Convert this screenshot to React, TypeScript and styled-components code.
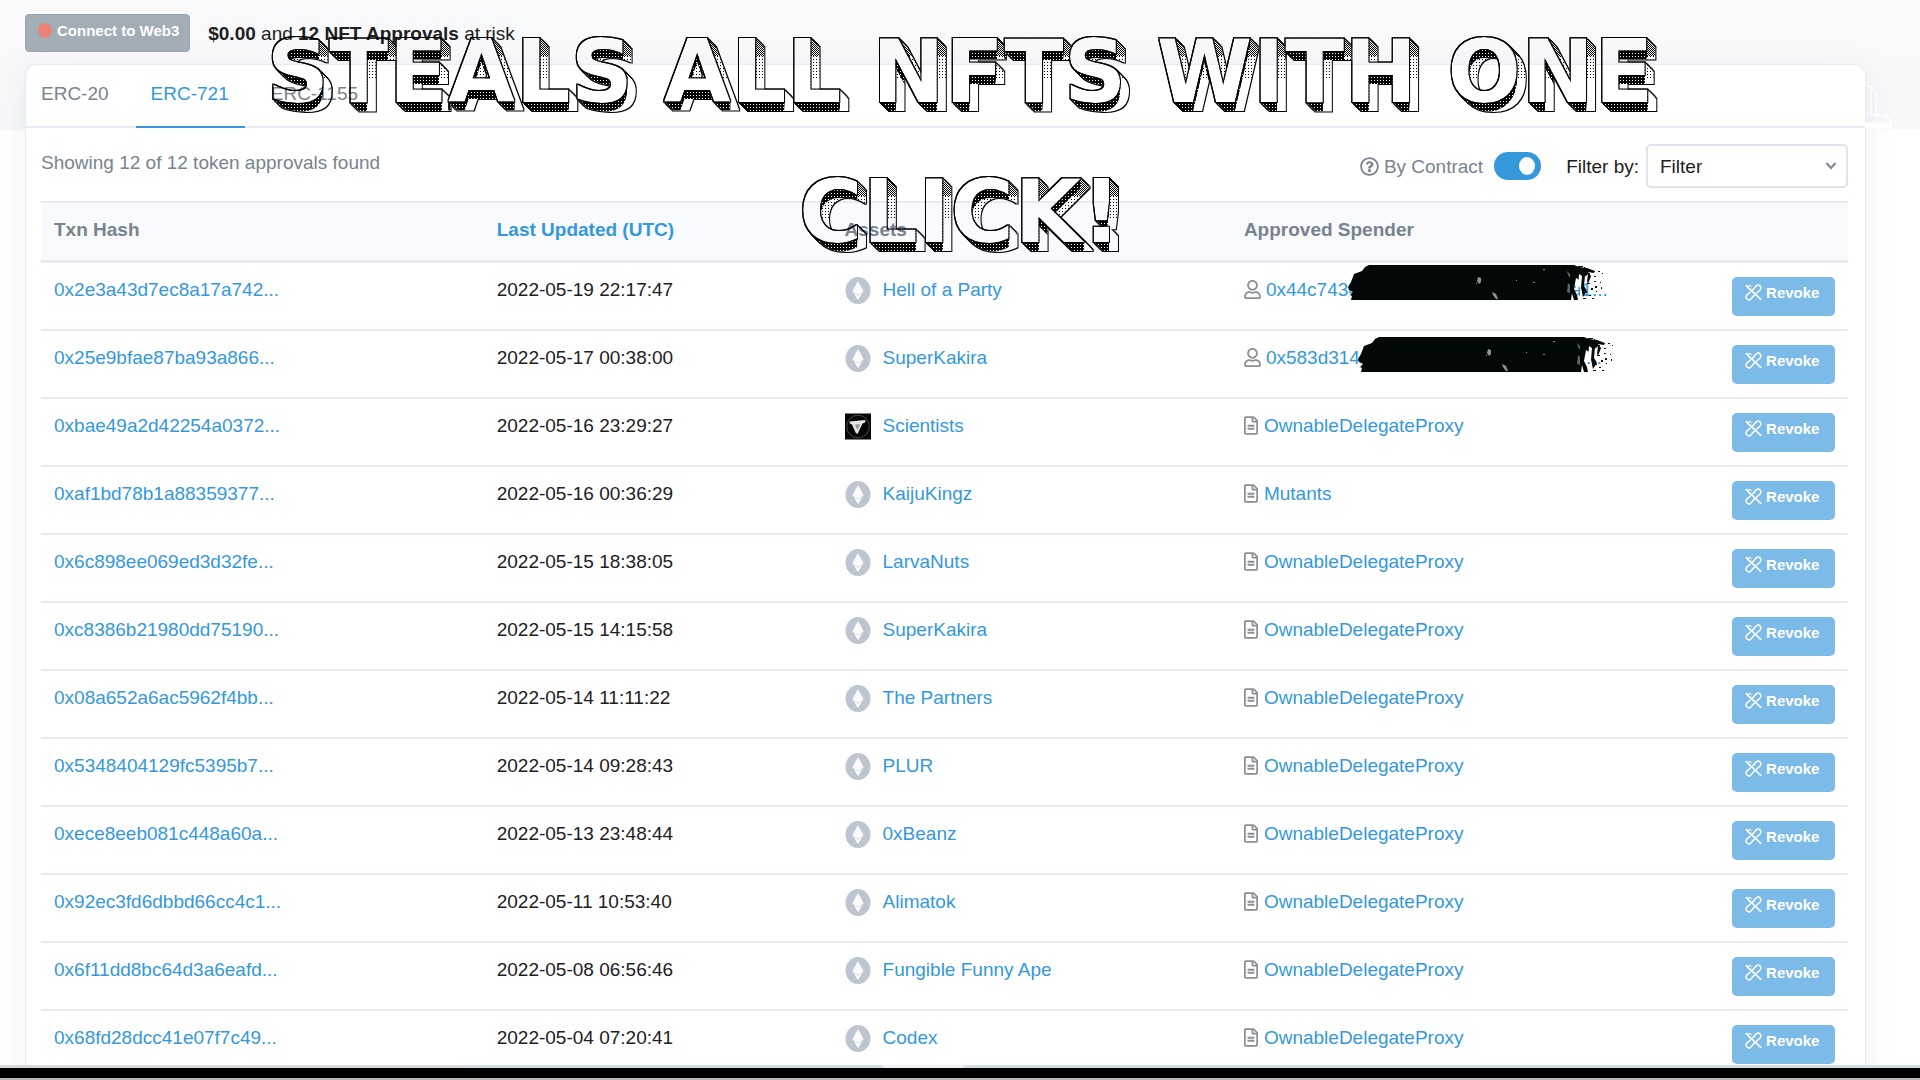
import React from "react";
import styled, { createGlobalStyle } from "styled-components";
import { FaRegUser, FaRegFileAlt, FaRegQuestionCircle } from "react-icons/fa";

const blue = "#3498db";
const grey = "#77838f";
const line = "#e7eaf3";

const GlobalStyle = createGlobalStyle`
  *, *::before, *::after { box-sizing: border-box; }
  body {
    margin: 0;
    background: #fff;
    color: #1e2022;
    font-family: "Liberation Sans", Arial, sans-serif;
    font-size: 19px;
    line-height: 25px;
  }
  a { color: ${blue}; text-decoration: none; }
  button, select, input { font-family: inherit; margin: 0; }
`;

const Page = styled.div`
  position: relative;
  height: 100vh;
  display: flex;
  flex-direction: column;
  overflow: hidden;
  background: linear-gradient(#f8f9fb, #f6f8fa) top / 100% 130px no-repeat #fff;
`;

const Main = styled.main`
  flex: 1;
  min-height: 0;
  overflow: hidden;
  display: flex;
  flex-direction: column;
  padding: 0 54px 0 25px;
`;

const TopBar = styled.header`
  flex: none;
  display: flex;
  align-items: flex-start;
  gap: 18px;
  padding: 14px 0 10px;
`;

const ConnectButton = styled.button`
  display: flex;
  align-items: center;
  gap: 5px;
  height: 38px;
  padding: 0 10px 5px 12px;
  border: 1px solid #9aa5ae;
  border-radius: 4px;
  background: #a3adb5;
  color: #fff;
  font-size: 15px;
  font-weight: 700;
`;

const StatusDot = styled.span`
  width: 14px;
  height: 15px;
  border-radius: 50%;
  background: #ea8279;
`;

const RiskText = styled.p`
  margin: 0;
  line-height: 40px;
`;

const Card = styled.section`
  flex: none;
  background: #fff;
  border: 1px solid ${line};
  border-radius: 12px;
  box-shadow: 0 8px 30px rgba(140, 152, 164, 0.14);
`;

const Tabs = styled.nav`
  display: flex;
  gap: 11px;
  border-bottom: 2px solid ${line};
`;

const Tab = styled.a<{ $active?: boolean }>`
  height: 63px;
  margin-bottom: -2px;
  padding: 0 16px 0 15px;
  line-height: 58px;
  color: ${(p) => (p.$active ? blue : grey)};
  border-bottom: 2px solid ${(p) => (p.$active ? blue : "transparent")};
`;

const CardBody = styled.div`
  padding: 0 17px 20px 15px;
`;

const Toolbar = styled.div`
  display: flex;
  justify-content: space-between;
  align-items: flex-start;
  padding: 16px 0 13px;
`;

const Count = styled.p`
  margin: 0;
  line-height: 38px;
  color: ${grey};
`;

const Controls = styled.div`
  display: flex;
  align-items: center;
  height: 44px;
`;

const SwitchLabel = styled.label`
  display: flex;
  align-items: center;
  gap: 5px;
  margin-right: 25px;
  color: ${grey};
`;

const Switch = styled.input`
  appearance: none;
  width: 47px;
  height: 28px;
  margin-left: 6px;
  padding: 5px 6px;
  display: flex;
  justify-content: flex-end;
  border-radius: 14px;
  background: ${blue};
  &::after {
    content: "";
    width: 16px;
    height: 18px;
    border-radius: 50%;
    background: #fff;
  }
  &:not(:checked) { justify-content: flex-start; background: #bdc5d1; }
`;

const FilterLabel = styled.label`
  margin-right: 7px;
`;

const FilterBox = styled.span`
  display: grid;
  align-items: center;
  width: 202px;
  & > * { grid-area: 1 / 1; }
  & > svg { justify-self: end; margin-right: 11px; pointer-events: none; }
`;

const FilterSelect = styled.select`
  appearance: none;
  height: 44px;
  width: 100%;
  padding: 0 12px;
  border: 2px solid #dfe3ea;
  border-radius: 5px;
  background: #fff;
  color: #1e2022;
  font-size: 19px;
`;

const Table = styled.table`
  width: 100%;
  table-layout: fixed;
  border-collapse: separate;
  border-spacing: 0;
`;

const Th = styled.th<{ $w: string }>`
  width: ${(p) => p.$w};
  height: 62px;
  padding: 0 13px 4px;
  border-top: 2px solid ${line};
  border-bottom: 3px solid ${line};
  background: #f8fafd;
  color: ${grey};
  text-align: left;
`;

const Td = styled.td`
  height: 68px;
  padding: 14px 13px 0;
  border-bottom: 2px solid ${line};
  vertical-align: top;
  white-space: nowrap;
`;

const Asset = styled.span`
  display: flex;
  align-items: flex-start;
  gap: 12px;
`;

const Spender = styled.span<{ $wide?: boolean }>`
  position: relative;
  display: flex;
  align-items: center;
  gap: ${(p) => (p.$wide ? 5 : 6)}px;
  color: #8b8f97;
`;

const UserIcon = styled(FaRegUser)`
  width: 17px;
  height: 19px;
`;

const FileIcon = styled(FaRegFileAlt)`
  width: 14px;
  height: 19px;
`;

const HiddenSpender = styled.a<{ $span: number }>`
  display: flex;
  justify-content: space-between;
  width: ${(p) => p.$span}px;
`;

const Brush = styled.svg<{ $left: number; $top: number }>`
  position: absolute;
  left: ${(p) => p.$left}px;
  top: ${(p) => p.$top}px;
`;

const RevokeButton = styled.button`
  display: flex;
  align-items: center;
  justify-content: center;
  gap: 4px;
  width: 103px;
  height: 39px;
  padding: 0 2px 8px 0;
  border: 0;
  border-radius: 5px;
  background: #7cbae8;
  color: #fff;
  font-size: 15px;
  font-weight: 700;
`;

const Headline = styled.h1`
  position: absolute;
  top: 0;
  left: 0;
  right: 0;
  margin: 0;
  padding-top: 2px;
  text-align: center;
  color: #000;
  font: 700 87px/140px "DejaVu Sans", Inter, sans-serif;
  pointer-events: none;
`;

const HeadlineRow = styled.span`
  display: block;
  white-space: nowrap;
  filter: url(#extrude);
`;

const Defs = styled.svg`
  position: absolute;
  width: 0;
  height: 0;
`;

const Ghost = styled.svg`
  position: absolute;
  top: 84px;
  right: 26px;
`;

const Strip = styled.div`
  flex: none;
  display: flex;
  height: 3px;
`;

const StripPart = styled.span<{ $grow: number; $c: string }>`
  flex: ${(p) => p.$grow} 0 0;
  background: ${(p) => p.$c};
`;

const BottomBar = styled.footer`
  flex: none;
  height: 12px;
  background: #000;
  border-bottom: 2px solid #b4b8bd;
`;

const rows: [string, string, string, string][] = [
  ["0x2e3a43d7ec8a17a742...", "2022-05-19 22:17:47", "Hell of a Party", "0x44c7434"],
  ["0x25e9bfae87ba93a866...", "2022-05-17 00:38:00", "SuperKakira", "0x583d314"],
  ["0xbae49a2d42254a0372...", "2022-05-16 23:29:27", "Scientists", "OwnableDelegateProxy"],
  ["0xaf1bd78b1a88359377...", "2022-05-16 00:36:29", "KaijuKingz", "Mutants"],
  ["0x6c898ee069ed3d32fe...", "2022-05-15 18:38:05", "LarvaNuts", "OwnableDelegateProxy"],
  ["0xc8386b21980dd75190...", "2022-05-15 14:15:58", "SuperKakira", "OwnableDelegateProxy"],
  ["0x08a652a6ac5962f4bb...", "2022-05-14 11:11:22", "The Partners", "OwnableDelegateProxy"],
  ["0x5348404129fc5395b7...", "2022-05-14 09:28:43", "PLUR", "OwnableDelegateProxy"],
  ["0xece8eeb081c448a60a...", "2022-05-13 23:48:44", "0xBeanz", "OwnableDelegateProxy"],
  ["0x92ec3fd6dbbd66cc4c1...", "2022-05-11 10:53:40", "Alimatok", "OwnableDelegateProxy"],
  ["0x6f11dd8bc64d3a6eafd...", "2022-05-08 06:56:46", "Fungible Funny Ape", "OwnableDelegateProxy"],
  ["0x68fd28dcc41e07f7c49...", "2022-05-04 07:20:41", "Codex", "OwnableDelegateProxy"],
];

const EthIcon = () => (
  <svg width="26" height="27" viewBox="0 0 26 27" aria-hidden="true">
    <ellipse cx="13" cy="13.5" rx="12.5" ry="13.5" fill="#bdc5d1" />
    <path d="M13 4 L18.5 14 L13 23.3 L7.5 14 Z" fill="#fbfbfc" />
    <path d="M7.5 14.4 L13 17.6 L18.5 14.4 L17.8 15.8 L13 18.8 L8.2 15.8 Z" fill="#d9dee5" />
  </svg>
);

const ScientistsIcon = () => (
  <svg width="26" height="27" viewBox="0 0 26 27" aria-hidden="true">
    <rect width="26" height="26" y="0.5" fill="#060606" />
    <circle cx="13" cy="13.5" r="11.3" fill="none" stroke="#4a4a4a" strokeWidth="1" />
    <path d="M4.5 8.5 L20.5 7 L20 9.5 L17.5 10.5 L12.5 21 L10.5 19.5 L7 11.5 L4.8 10.5 Z" fill="#e6e6e6" />
    <path d="M10 11.5 L15.5 11.2 L12.3 17 Z" fill="#999" />
  </svg>
);

const RevokeIcon = () => (
  <svg width="17" height="17" viewBox="0 0 17 17" fill="none" stroke="#fff" strokeWidth="1.5" strokeLinecap="round" strokeLinejoin="round" aria-hidden="true">
    <path d="M1.2 1.6 L15.8 15.4" />
    <path d="M7 7.2 C4.6 5.6 1.4 3.6 3.4 1.8 C4.6 1 5.6 1.8 6 2.4" strokeWidth="1.1" />
    <path d="M5.4 8 L2.2 10.6 C.6 12.2 .8 14 1.9 15 C3.2 16.2 5 15.9 6.3 14.6 L9.6 10.8" />
    <path d="M7.4 6.2 L10.6 2.4 C11.9 1.1 13.8 .8 15 1.9 C16.2 3 16.2 4.8 14.8 6.2 L11.6 9" />
  </svg>
);

const specks = [
  [228, 5], [232, 8, 3, 2], [236, 3], [241, 9], [246, 12, 2, 1], [250, 7, 2], [254, 9], [239, 19, 3], [246, 17, 2], [252, 18, 1], [243, 24, 2, 2],
  [236, 28, 3, 1], [241, 31, 2], [248, 27], [247, 22, 2, 2], [235, 34, 3], [230, 2, 5, 1], [238, 6, 6, 1], [253, 23, 1, 2], [244, 34, 2], [234, 13, 2, 5],
];

const RedactBrush = ({ left, top }: { left: number; top: number }) => (
  <Brush $left={left} $top={top} width="262" height="37" viewBox="0 0 262 37" aria-hidden="true">
    <path
      fill="#020807"
      d="M21 1 H226 L231 3 L239 4 L247 7 L246 9 L240 8 L243 12 L240 20 L237 11 L236 22 L239 27 L235 33 L233 24 L234 12 L231 10 L230 22 L228 14 L226 25 L229 31 L230 36 L226 36 L224 29 L223 36 H3 L4 32 L2 31 L5 28 L1 26 L0 23 L3 18 L6 10 L14 7 L17 3 Z"
    />
    {specks.map(([x, y, w = 1, h = 1], i) => (
      <rect key={i} x={x} y={y} width={w} height={h} fill="#0a1210" />
    ))}
    <g fill="#8f9695">
      <path d="M130 13 l3 1 v4 l-2 2 l-2 -3 z" />
      <path d="M144 28 l4 2 l2 5 l-2 0 l-3 -4 z" />
      <path d="M219 7 l3 3 v4 l-2 -3 z M220 19 l2 2 v8 l-3 -1 z" fill="#5d6665" />
      <rect x="195" y="5" width="2" height="1" />
      <rect x="168" y="16" width="1" height="1" />
      <rect x="185" y="18" width="2" height="1" />
      <rect x="128" y="19" width="1" height="1" />
    </g>
    <g fill="#fff">
      <path d="M228 14 l3 2 v7 l-3 3 z M233 24 l1 9 l-2 3 v-8 z M240 10 l-1 8 l-2 -5 z" />
    </g>
  </Brush>
);

/* Turns flat lettering into a see-through outline with a dotted block shadow */
const ExtrudeFilter = () => (
  <Defs aria-hidden="true">
    <filter id="extrude" primitiveUnits="userSpaceOnUse" colorInterpolationFilters="sRGB" x="0%" y="0%" width="100%" height="110%">
      <feOffset in="SourceAlpha" dx="1" dy="1" result="a1" />
      <feMerge result="m1"><feMergeNode in="SourceAlpha" /><feMergeNode in="a1" /></feMerge>
      <feOffset in="m1" dx="2" dy="2" result="a2" />
      <feMerge result="m2"><feMergeNode in="m1" /><feMergeNode in="a2" /></feMerge>
      <feOffset in="m2" dx="4" dy="4" result="a4" />
      <feMerge result="m4"><feMergeNode in="m2" /><feMergeNode in="a4" /></feMerge>
      <feOffset in="m4" dx="2" dy="2" result="a6" />
      <feMerge result="block"><feMergeNode in="m4" /><feMergeNode in="a6" /></feMerge>

      <feOffset in="SourceAlpha" dx="0" dy="1" result="v1" />
      <feMerge result="w1"><feMergeNode in="SourceAlpha" /><feMergeNode in="v1" /></feMerge>
      <feOffset in="w1" dx="0" dy="2" result="v2" />
      <feMerge result="w2"><feMergeNode in="w1" /><feMergeNode in="v2" /></feMerge>
      <feOffset in="w2" dx="0" dy="4" result="v4" />
      <feMerge result="w4"><feMergeNode in="w2" /><feMergeNode in="v4" /></feMerge>
      <feOffset in="w4" dx="0" dy="2" result="v6" />
      <feMerge result="drop"><feMergeNode in="w4" /><feMergeNode in="v6" /></feMerge>

      <feComposite in="block" in2="SourceAlpha" operator="out" result="sides" />
      <feComposite in="sides" in2="drop" operator="in" result="under" />
      <feComposite in="sides" in2="drop" operator="out" result="right" />

      <feFlood x="0" y="0" width="1" height="1" floodColor="#000" result="p" />
      <feOffset in="p" dx="0" dy="0" x="0" y="0" width="3" height="3" result="t3" />
      <feTile in="t3" result="holes" />
      <feComposite in="under" in2="holes" operator="out" result="underInk" />

      <feFlood x="0" y="0" width="1" height="1" floodColor="#000" result="q" />
      <feFlood x="1" y="1" width="1" height="1" floodColor="#000" result="r" />
      <feMerge x="0" y="0" width="2" height="2" result="t2"><feMergeNode in="q" /><feMergeNode in="r" /></feMerge>
      <feTile in="t2" x="0" y="30" width="3000" height="24" result="dense" />
      <feTile in="t3" x="0" y="54" width="3000" height="24" result="sparse" />
      <feMerge result="dots"><feMergeNode in="dense" /><feMergeNode in="sparse" /></feMerge>
      <feComposite in="right" in2="dots" operator="in" result="rightInk" />

      <feMorphology in="SourceAlpha" operator="dilate" radius="1" result="fa" />
      <feComposite in="fa" in2="SourceAlpha" operator="out" result="faceLine" />
      <feMorphology in="block" operator="dilate" radius="1" result="fb" />
      <feComposite in="fb" in2="block" operator="out" result="blockLine" />
      <feMerge>
        <feMergeNode in="underInk" />
        <feMergeNode in="rightInk" />
        <feMergeNode in="faceLine" />
        <feMergeNode in="blockLine" />
      </feMerge>
    </filter>
  </Defs>
);

export default function App() {
  return (
    <Page>
      <GlobalStyle />
      <ExtrudeFilter />
      <Main>
        <TopBar>
          <ConnectButton type="button">
            <StatusDot />
            Connect to Web3
          </ConnectButton>
          <RiskText>
            <b>$0.00</b> and <b>12 NFT Approvals</b> at risk
          </RiskText>
        </TopBar>
        <Card>
          <Tabs>
            <Tab href="#erc20">ERC-20</Tab>
            <Tab href="#erc721" $active>ERC-721</Tab>
            <Tab href="#erc1155">ERC-1155</Tab>
          </Tabs>
          <CardBody>
            <Toolbar>
              <Count>Showing 12 of 12 token approvals found</Count>
              <Controls>
                <SwitchLabel>
                  <FaRegQuestionCircle size={19} />
                  By Contract
                  <Switch type="checkbox" defaultChecked />
                </SwitchLabel>
                <FilterLabel htmlFor="filter">Filter by:</FilterLabel>
                <FilterBox>
                  <FilterSelect id="filter" defaultValue="Filter">
                    <option>Filter</option>
                  </FilterSelect>
                  <svg width="12" height="8" viewBox="0 0 12 8" fill="none" stroke="#858c96" strokeWidth="2.2" aria-hidden="true">
                    <path d="M1.5 1 L6 6 L10.5 1" />
                  </svg>
                </FilterBox>
              </Controls>
            </Toolbar>
            <Table>
              <thead>
                <tr>
                  <Th $w="24.5%">Txn Hash</Th>
                  <Th $w="19.25%"><a href="#updated">Last Updated (UTC)</a></Th>
                  <Th $w="22.1%">Assets</Th>
                  <Th $w="27%">Approved Spender</Th>
                  <Th $w="7.15%" aria-label="Action" />
                </tr>
              </thead>
              <tbody>
                {rows.map(([hash, date, asset, spender], i) => (
                  <tr key={hash}>
                    <Td><a href="#tx">{hash}</a></Td>
                    <Td>{date}</Td>
                    <Td>
                      <Asset>
                        {asset === "Scientists" ? <ScientistsIcon /> : <EthIcon />}
                        <a href="#asset">{asset}</a>
                      </Asset>
                    </Td>
                    <Td>
                      {i < 2 ? (
                        <Spender $wide>
                          <UserIcon />
                          <HiddenSpender href="#spender" $span={i === 0 ? 342 : 336}>
                            <span>{spender}</span>
                            <span>{i === 0 ? "a1..." : "..."}</span>
                          </HiddenSpender>
                          <RedactBrush left={i === 0 ? 104 : 114} top={i === 0 ? -13 : -9} />
                        </Spender>
                      ) : (
                        <Spender>
                          <FileIcon />
                          <a href="#spender">{spender}</a>
                        </Spender>
                      )}
                    </Td>
                    <Td>
                      <RevokeButton type="button">
                        <RevokeIcon />
                        Revoke
                      </RevokeButton>
                    </Td>
                  </tr>
                ))}
              </tbody>
            </Table>
          </CardBody>
        </Card>
      </Main>
      <Ghost width="32" height="46" viewBox="0 0 32 46" fill="none" stroke="#fff" strokeWidth="1.2" aria-hidden="true">
        <path d="M2 2 H9 L14 8 V31 M9 2 V31 H24 V39 H0 M24 31 L29 36 V44 H4 M24 39 L29 44" />
        <path d="M0 39 H24 L29 44 H4 Z" fill="#fff" />
      </Ghost>
      <Headline>
        <HeadlineRow>STEALS ALL NFTS WITH ONE</HeadlineRow>
        <HeadlineRow>CLICK!</HeadlineRow>
      </Headline>
      <Strip>
        <StripPart $grow={468} $c="#d9d9d9" />
        <StripPart $grow={415} $c="#d3dfe6" />
        <StripPart $grow={80} $c="#eef2f4" />
        <StripPart $grow={957} $c="#d3dfe9" />
      </Strip>
      <BottomBar />
    </Page>
  );
}
